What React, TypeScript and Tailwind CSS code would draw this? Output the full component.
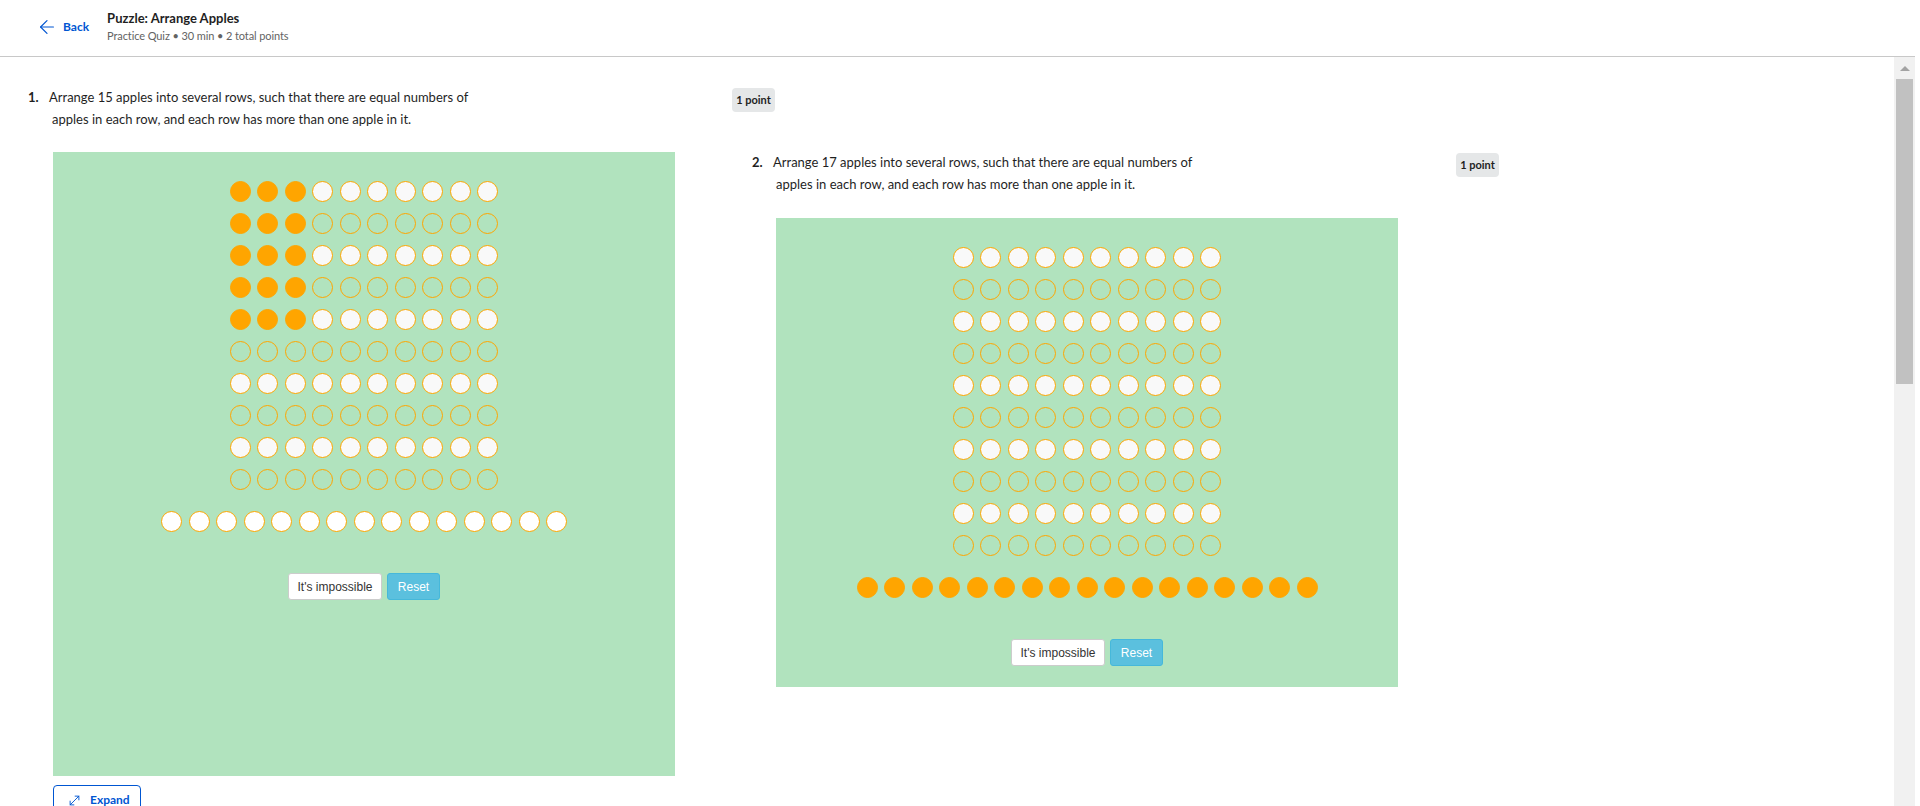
import React from 'react';
import { ArrowLeft, MoveDiagonal } from 'lucide-react';

type Kind = 'orange' | 'white' | 'hollow' | 'pure';

const kindClass: Record<Kind, string> = {
  orange: 'bg-[#ffa500] border border-[#ffa500]',
  white: 'bg-[#f9f9f9] border border-[#ffa500]',
  hollow: 'bg-transparent border border-[#ffa500]',
  pure: 'bg-white border border-[#ffa500]',
};

const Apple = ({ kind }: { kind: Kind }) => (
  <span className={`block w-[21px] h-[21px] rounded-full ${kindClass[kind]}`} />
);

const AppleRow = ({ kinds }: { kinds: Kind[] }) => (
  <div className="flex justify-center gap-[6.5px]">
    {kinds.map((k, i) => (
      <Apple key={i} kind={k} />
    ))}
  </div>
);

// 10x10 board; the first `filledCols` columns of the first `filledRows` rows hold apples
const buildGrid = (filledCols: number, filledRows: number): Kind[][] =>
  Array.from({ length: 10 }, (_, r) =>
    Array.from({ length: 10 }, (_, c) => {
      if (r < filledRows && c < filledCols) return 'orange';
      return r % 2 === 0 ? 'white' : 'hollow';
    })
  );

const PuzzleBoard = ({
  grid,
  pool,
  height,
}: {
  grid: Kind[][];
  pool: Kind[];
  height: string;
}) => (
  <div className={`w-[622px] ${height} bg-[#b1e3be] flex flex-col items-center pt-[29px]`}>
    <div className="flex flex-col gap-[11px]">
      {grid.map((row, i) => (
        <AppleRow key={i} kinds={row} />
      ))}
    </div>
    <div className="mt-[21px]">
      <AppleRow kinds={pool} />
    </div>
    <div className="mt-[41px] flex gap-[5px] font-['Liberation_Sans',Arial,sans-serif] text-[12px] leading-[18px]">
      <button className="w-[94px] h-[27px] bg-white border border-[#cccccc] rounded-[3px] text-[#333333]">
        It's impossible
      </button>
      <button className="w-[53px] h-[27px] bg-[#5bc0de] border border-[#46b8da] rounded-[3px] text-white">
        Reset
      </button>
    </div>
  </div>
);

const QuestionHead = ({ num, lines }: { num: number; lines: string[] }) => (
  <div className="flex items-start justify-between w-[747px]">
    <div className="flex text-[13px] leading-[22px] text-[#1f1f1f]">
      <span className="w-[21px] font-bold">{num}.</span>
      <div>
        {lines.map((l, i) => (
          <div key={i} className={i > 0 ? 'pl-[3px]' : ''}>
            {l}
          </div>
        ))}
      </div>
    </div>
    <span className="mt-[2px] w-[43px] h-[24px] flex items-center justify-center rounded-[4px] bg-[#e5e7e8] text-[11px] font-bold text-[#1f1f1f]">
      1 point
    </span>
  </div>
);

export default function App() {
  const grid1 = buildGrid(3, 5);
  const grid2 = buildGrid(0, 0);
  const pool1: Kind[] = Array.from({ length: 15 }, () => 'pure');
  const pool2: Kind[] = Array.from({ length: 17 }, () => 'orange');

  return (
    <div className="w-[1920px] h-[806px] overflow-hidden bg-white flex flex-col pr-[5px] font-['Lato','Noto_Sans',sans-serif]">
      {/* Header */}
      <header className="h-[57px] shrink-0 border-b border-[#c8c8c8] flex items-start pl-[36px] pt-[10px]">
        <button className="flex items-center gap-[5px] mt-[6px] text-[#0056d2]">
          <ArrowLeft size={22} strokeWidth={1.3} />
          <span className="text-[12px] font-bold">Back</span>
        </button>
        <div className="ml-[18px]">
          <div className="text-[13px] leading-[16px] font-bold text-[#1f1f1f]">Puzzle: Arrange Apples</div>
          <div className="mt-[3px] text-[11px] leading-[14px] tracking-[-0.1px] text-[#636363]">
            Practice Quiz • 30 min • 2 total points
          </div>
        </div>
      </header>

      <div className="flex flex-1 min-h-0">
        {/* Content */}
        <main className="flex-1 overflow-hidden pl-[28px] pt-[29px]">
          <div className="flex items-start">
            <section className="w-[724px] shrink-0">
              <QuestionHead
                num={1}
                lines={[
                  'Arrange 15 apples into several rows, such that there are equal numbers of',
                  'apples in each row, and each row has more than one apple in it.',
                ]}
              />
              <div className="ml-[25px] mt-[22px]">
                <PuzzleBoard grid={grid1} pool={pool1} height="h-[624px]" />
                <button className="mt-[9px] w-[88px] h-[36px] pl-[13px] flex items-start pt-[6px] gap-[8px] border border-[#0056d2] rounded-[4px] text-[#0056d2]">
                  <MoveDiagonal size={15} strokeWidth={1.5} className="mt-[1px]" />
                  <span className="text-[12px] leading-[16px] font-bold">Expand</span>
                </button>
              </div>
            </section>

            <section className="w-[747px] shrink-0 mt-[65px]">
              <QuestionHead
                num={2}
                lines={[
                  'Arrange 17 apples into several rows, such that there are equal numbers of',
                  'apples in each row, and each row has more than one apple in it.',
                ]}
              />
              <div className="ml-[24px] mt-[23px]">
                <PuzzleBoard grid={grid2} pool={pool2} height="h-[469px]" />
              </div>
            </section>
          </div>
        </main>

        {/* Scrollbar */}
        <div className="w-[21px] shrink-0 bg-[#f1f1f1] flex flex-col items-center">
          <span className="mt-[9px] w-0 h-0 border-l-[5px] border-r-[5px] border-b-[5px] border-l-transparent border-r-transparent border-b-[#a3a3a3]" />
          <span className="mt-[8px] w-[17px] h-[305px] bg-[#c1c1c1]" />
        </div>
      </div>
    </div>
  );
}
